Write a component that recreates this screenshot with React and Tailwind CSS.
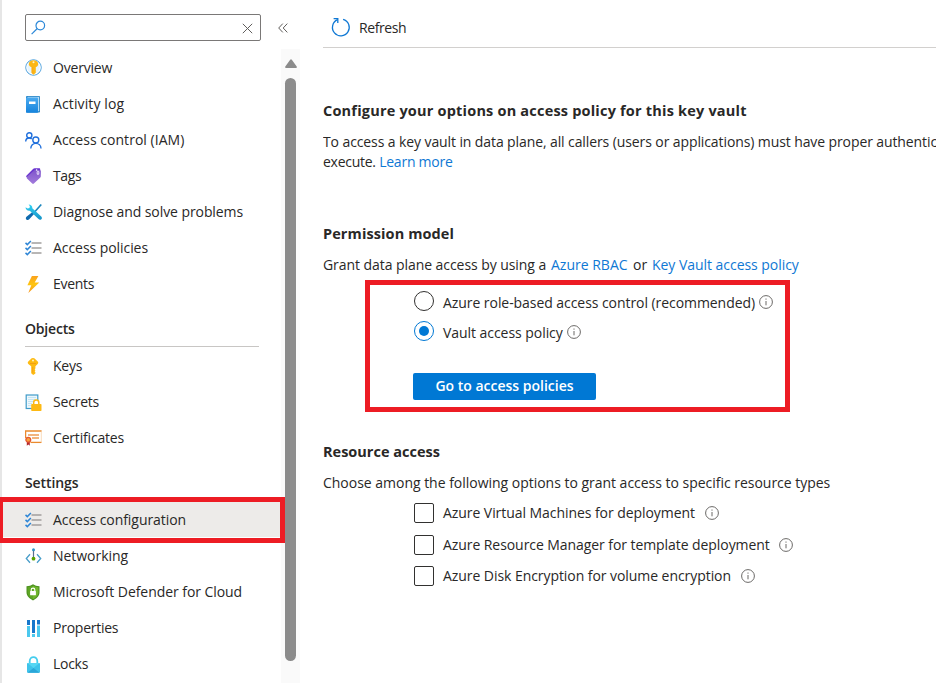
const OverviewIcon = () => (
  <svg width="17" height="17" viewBox="0 0 17 17" className="-mt-px">
    <circle cx="8.500" cy="8.500" r="7.700" fill="#e6f4fd" stroke="#3a96d9" />
    <circle cx="8.500" cy="8.500" r="6.700" fill="none" stroke="#fff" strokeWidth="1" />
    <path d="M8.500 1.200c2.700 0 4.700 1.600 4.700 3.700 0 1.600-1 2.700-2.400 3.200v5.600l-2.300 2-2.100-2V8.100C4.900 7.600 3.800 6.500 3.800 4.900c0-2.100 2-3.700 4.700-3.700z" fill="#fcb714" />
    <path d="M7.200 8h1v7l-1-1z" fill="#f9a61b" />
    <circle cx="8.500" cy="3.200" r="1" fill="#fff3c4" />
  </svg>
);

const LogIcon = () => (
  <svg width="16" height="17" viewBox="0 0 16 17">
    <defs>
      <linearGradient id="log" x1="0" y1="0" x2="0" y2="1">
        <stop offset="0" stopColor="#4aaaf0" />
        <stop offset="1" stopColor="#1583dc" />
      </linearGradient>
    </defs>
    <rect x="1" y="0" width="14" height="16.500" rx="1" fill="#2483c5" />
    <path d="M2.500.8h11.700v14.400H2.500z" fill="#b6dcf5" />
    <rect x="1" y="1.600" width="12" height="15.200" rx=".8" fill="url(#log)" />
    <rect x="4" y="5.500" width="6.500" height="2.500" fill="#fff" />
  </svg>
);

const PeopleIcon = () => (
  <svg width="17" height="17" viewBox="0 0 17 17" fill="none" stroke="#1f6fdc" strokeWidth="1.400">
    <circle cx="4.300" cy="3.300" r="2.600" />
    <path d="M.7 9.600C.7 7.300 2.300 6 4.200 6c1 0 1.900.3 2.500 1" />
    <circle cx="10.800" cy="8" r="3" />
    <path d="M5.800 16.600c0-3.200 2.200-5.200 5-5.200s5.200 2 5.200 5.200" />
  </svg>
);

const TagIcon = () => (
  <svg width="16" height="16" viewBox="0 0 16 16">
    <defs>
      <linearGradient id="tag" x1="0" y1="0" x2="0" y2="1">
        <stop offset="0" stopColor="#7f55cb" />
        <stop offset="1" stopColor="#a27bdc" />
      </linearGradient>
    </defs>
    <path d="M.9 8.300 8.300.8C8.700.4 9.100.2 9.700.2h4.500c.6 0 1 .4 1 1v4.600c0 .5-.2 1-.5 1.300L7.800 14.600z" fill="#6b35cf" />
    <path d="M2 8.700 9.500 2h4.700c.9 0 1.600.5 1.600 1.200v5c0 .5-.2.900-.5 1.200L8.900 15.600c-.5.500-1.200.500-1.700 0L2 10.500c-.5-.5-.5-1.300 0-1.800z" fill="url(#tag)" />
    <ellipse cx="13" cy="4.800" rx=".9" ry="1.900" fill="#9a72dc" stroke="#f1eafc" strokeWidth=".9" />
    <circle cx="11.600" cy="2" r=".8" fill="#fff" />
  </svg>
);

const ToolsIcon = () => (
  <svg width="17" height="16" viewBox="0 0 16 16" preserveAspectRatio="none">
    <defs>
      <linearGradient id="wrench" x1="0" y1="0" x2="0" y2="1">
        <stop offset="0" stopColor="#32d4f5" />
        <stop offset="1" stopColor="#1591c6" />
      </linearGradient>
    </defs>
    <path d="M15.300.5 8.800 8.200" stroke="#1b86bd" strokeWidth="1.500" />
    <path d="m8.200 7 1.600 1.600-5.800 6.700c-.8.800-2 .800-2.700.1-.7-.7-.7-1.800.1-2.600z" fill="#0f6aae" />
    <path d="M3.400.4c2.200 0 3.700 1.600 3.500 3.900l8.400 8.200c.8.800.8 1.900.1 2.700-.8.700-1.900.700-2.700-.1L4.500 6.700C2.300 7 .6 5.500.5 3.200l2 1.400 1.700-.6.400-1.700z" fill="url(#wrench)" />
  </svg>
);

const ChecklistIcon = () => (
  <svg width="17" height="16" viewBox="0 0 17 16" fill="none">
    <path d="M6.500 3h10M6.500 8h10M6.500 13h10" stroke="#a19f9d" strokeWidth="1.700" />
    <path d="m.5 2.900 1.800 1.700L5.900 1M.5 7.900l1.800 1.700L5.900 6M.5 12.900l1.800 1.700L5.900 11" stroke="#2f86d6" strokeWidth="1.500" />
  </svg>
);

const BoltIcon = () => (
  <svg width="16" height="17" viewBox="0 0 16 16" preserveAspectRatio="none">
    <defs>
      <linearGradient id="bolt" x1="0" y1="0" x2="0" y2="1">
        <stop offset="0" stopColor="#faa21d" />
        <stop offset=".5" stopColor="#fec510" />
        <stop offset="1" stopColor="#f79320" />
      </linearGradient>
    </defs>
    <path d="M6.900 0H13.400L9.700 6h4.600L3.300 16l3-7.300H2.400z" fill="url(#bolt)" />
  </svg>
);

const KeyIcon = () => (
  <svg width="16" height="17" viewBox="0 0 16 16" preserveAspectRatio="none">
    <path d="M8 0c1 0 1.700.4 2.400 1.200l2.300 2.200c.7.700.7 1.500 0 2.200L10.400 7.800v2l-.7.900.7.900-.7 1 .7.900v1L8.200 16 6.200 14.300V7.800L3.300 5.600c-.7-.7-.7-1.500 0-2.200l2.300-2.200C6.300.4 7 0 8 0z" fill="#fdbb13" />
    <path d="M7.200 8.500h1v5.700l-1-.8z" fill="#f6a11a" />
    <path d="M5 5.200h6" stroke="#f3a012" />
    <circle cx="8" cy="2.300" r="1" fill="#fff2c0" />
  </svg>
);

const SecretIcon = () => (
  <svg width="17" height="17" viewBox="0 0 17 17">
    <rect x="1.200" y="1" width="11.600" height="13.500" fill="#eef7fc" stroke="#3f9bc9" strokeWidth="1.200" />
    <path d="M3 3.500h8M3 5.500h8M3 7.500h8M3 9.500h4M3 11.500h4" stroke="#b9dff0" strokeWidth=".8" />
    <path d="M8.700 10.500V8.500c0-3.300 5.100-3.300 5.100 0v2" fill="#fff" stroke="#fdb913" strokeWidth="1.500" />
    <rect x="6.200" y="10" width="10.300" height="7" rx=".8" fill="#fdb913" />
  </svg>
);

const CertificateIcon = () => (
  <svg width="17" height="16" viewBox="0 0 17 16" fill="none">
    <path d="M.6 8V1h16" stroke="#ea8a2e" strokeWidth="1.300" />
    <path d="M5.500 12.400h11" stroke="#ea8a2e" strokeWidth="1.300" />
    <path d="M16.300 1v11.400" stroke="#f8cda0" strokeWidth=".7" />
    <path d="M3 5h11M7 8h7" stroke="#ee9c56" strokeWidth="1.300" />
    <path d="M1.800 11.500h3v4.300l-1.500-1.200-1.500 1.200z" fill="#b3282d" />
    <circle cx="3.300" cy="9.700" r="2.400" fill="#f9a03c" stroke="#e4572e" strokeWidth="1.300" />
  </svg>
);

const NetworkIcon = () => (
  <svg width="17" height="16" viewBox="0 0 17 16" fill="none">
    <path d="M5 6.300 1.300 10.500 5 14.700M12 6.300l3.700 4.200L12 14.700" stroke="#479dc9" strokeWidth="1.300" />
    <path d="M8.500 1.500v9" stroke="#5a6f8f" strokeWidth="1.200" />
    <circle cx="8.500" cy="1.700" r="1.500" fill="#2f92c5" />
    <circle cx="8.500" cy="10.700" r="1.900" fill="#57a300" />
  </svg>
);

const ShieldIcon = () => (
  <svg width="16" height="17" viewBox="0 0 16 17">
    <path d="M8 .3c1.800 1.200 4 1.900 6.500 1.900v6c0 4-3.500 6.500-6.500 8.300C5 14.700 1.500 12.200 1.500 8.200v-6C4 2.200 6.200 1.500 8 .3z" fill="#4d9220" />
    <path d="M8 1.500c1.500.9 3.400 1.600 5.400 1.700v5c0 3.400-2.800 5.500-5.400 7.100z" fill="#6fb52c" />
    <path d="M8 1.500C6.500 2.400 4.600 3.100 2.600 3.200v5c0 3.400 2.800 5.500 5.400 7.100z" fill="#5ea624" />
    <path d="M6.200 7.500V5.800c0-2.200 3.600-2.200 3.600 0v1.700" fill="none" stroke="#fff" strokeWidth="1.100" />
    <rect x="5.100" y="7" width="5.800" height="4.200" rx=".5" fill="#fff" />
  </svg>
);

const PropertiesIcon = () => (
  <svg width="17" height="17" viewBox="0 0 17 17">
    <path d="M2 0h3v5H2zM7 0h3v13H7zM12 0h3v4.500h-3z" fill="#1777cc" />
    <path d="M2 6h3v11H2zM7 14h3v3H7zM12 5.500h3V17h-3z" fill="#4cc8ee" />
  </svg>
);

const LockIcon = () => (
  <svg width="17" height="17" viewBox="0 0 17 17">
    <path d="M4.700 8V5.300c0-5.600 7.600-5.600 7.600 0V8" fill="none" stroke="#45cdee" strokeWidth="1.800" />
    <rect x="2" y="7" width="13" height="9.800" rx=".8" fill="#3fc3ea" />
    <path d="m2.500 16.800 6-4.800 6 4.800z" fill="#2aa6d8" />
    <path d="M2.500 7h12l-6 5z" fill="#55d6f3" />
  </svg>
);

const InfoIcon = ({ className }) => (
  <svg className={className} width="14" height="14" viewBox="0 0 14 14" fill="none">
    <circle cx="7" cy="7" r="6.400" stroke="#6b6967" />
    <path d="M7 6v4.300M7 3.500v1.200" stroke="#6b6967" />
  </svg>
);

const topItems = [
  [OverviewIcon, "Overview", "tracking-[-0.2px]"],
  [LogIcon, "Activity log", "tracking-[0.12px]"],
  [PeopleIcon, "Access control (IAM)", "tracking-[0.03px]"],
  [TagIcon, "Tags", "tracking-[-0.4px]"],
  [ToolsIcon, "Diagnose and solve problems", "tracking-[-0.08px]"],
  [ChecklistIcon, "Access policies", "tracking-[-0.06px]"],
  [BoltIcon, "Events", "tracking-[-0.3px]"],
];
const objectItems = [
  [KeyIcon, "Keys", "tracking-[-0.25px]"],
  [SecretIcon, "Secrets", "tracking-[-0.2px]"],
  [CertificateIcon, "Certificates", "tracking-[-0.18px]"],
];
const settingItems = [
  [ChecklistIcon, "Access configuration", "tracking-[-0.06px]", true],
  [NetworkIcon, "Networking", "tracking-[-0.04px]"],
  [ShieldIcon, "Microsoft Defender for Cloud", "tracking-[-0.06px]"],
  [PropertiesIcon, "Properties", "tracking-[-0.25px]"],
  [LockIcon, "Locks", "tracking-[-0.28px]"],
];

const NavItem = ({ item: [Icon, label, tracking, active] }) => (
  <div className={`relative flex h-9 items-center pt-0.5 pl-[23px] ${active ? "bg-[#edebe9]" : ""}`}>
    <span className="w-[17px] shrink-0"><Icon /></span>
    <span className={`ml-[11px] whitespace-nowrap ${tracking}`}>{label}</span>
    {active && <div className="absolute -top-1 -left-[2px] h-[46px] w-[285px] border-[5px] border-l-[3px] border-[#ed1c24]" />}
  </div>
);

const Sidebar = () => (
  <aside className="flex h-full w-[300px] shrink-0 flex-col border-l-2 border-[#e6e6e6]">
    <div className="flex h-[49px] shrink-0 items-start pt-3.5 pl-[23px]">
      <div className="flex h-[27px] w-[236px] items-center justify-between rounded-[2px] border border-[#7a7877] pr-[7px] pl-[5px]">
        <svg width="15" height="15" viewBox="0 0 15 15" fill="none" stroke="#2b88d8" strokeWidth="1.200">
          <circle cx="9.300" cy="5.500" r="4.300" />
          <path d="M6.300 8.500.6 14.200" />
        </svg>
        <svg width="11" height="11" viewBox="0 0 11 11" stroke="#605e5c" className="mt-0.5">
          <path d="m.8.8 9.400 9.400M10.200.8.8 10.200" />
        </svg>
      </div>
      <svg width="10" height="10" viewBox="0 0 10 10" fill="none" stroke="#605e5c" className="mt-[9px] ml-[17px]">
        <path d="M4.800.6.700 5l4.100 4.400M9.300.6 5.200 5l4.100 4.400" />
      </svg>
    </div>
    <div className="flex min-h-0 flex-1">
      <nav className="w-[279px] shrink-0">
        {topItems.map((i) => <NavItem key={i[1]} item={i} />)}
        <h3 className="ml-[23px] flex h-[46px] w-[234px] items-center border-b border-[#c8c6c4] pt-[10px] font-semibold tracking-[-0.2px]">Objects</h3>
        {objectItems.map((i) => <NavItem key={i[1]} item={i} />)}
        <h3 className="ml-[23px] flex h-[46px] w-[234px] items-center pt-[9px] font-semibold tracking-[-0.1px]">Settings</h3>
        {settingItems.map((i) => <NavItem key={i[1]} item={i} />)}
      </nav>
      <div className="flex w-[19px] flex-col items-center bg-[#fafafa] pt-[10px]">
        <svg width="12" height="9" viewBox="0 0 12 9">
          <path d="M5 .9a1.200 1.200 0 0 1 2 0l4.700 6.600c.4.700.1 1.500-.7 1.500H1C.2 9-.1 8.200.3 7.500z" fill="#8b8b8b" />
        </svg>
        <div className="mt-[10px] h-[583px] w-[11px] rounded-full bg-[#8b8b8b]" />
      </div>
    </div>
  </aside>
);

const Radio = ({ checked }) => (
  <span className={`flex size-5 items-center justify-center rounded-full border ${checked ? "border-[#0078d4]" : "border-[#323130]"}`}>
    {checked && <span className="size-[10px] rounded-full bg-[#0078d4]" />}
  </span>
);

const Check = ({ label, tracking, className, info }) => (
  <div className={`flex h-5 items-center ${className}`}>
    <span className="size-5 rounded-[2px] border border-[#323130]" />
    <span className={`ml-[9px] ${tracking}`}>{label}</span>
    <InfoIcon className={info} />
  </div>
);

const Link = ({ children, className }) => <a className={`text-[#0f78d4] ${className}`}>{children}</a>;

export default function App() {
  return (
    <div className="flex h-[683px] w-[936px] overflow-hidden bg-white font-['Open_Sans','Noto_Sans',sans-serif] text-sm leading-5 text-[#292827]">
      <Sidebar />
      <main className="ml-[23px] min-w-0 flex-1 overflow-hidden whitespace-nowrap">
        <div className="flex h-12 items-center border-b border-[#d2d0ce] pb-[1px] pl-2 pt-2">
          <svg width="20" height="20" viewBox="0 0 20 20" fill="none" stroke="#0f78d4" strokeWidth="1.300">
            <path d="M12.100 2.300A8.400 8.400 0 1 1 6.500 2.700" />
            <path d="M2.600 1.700h4.200V6" />
          </svg>
          <span className="mt-0.5 ml-2 tracking-[-0.43px]">Refresh</span>
        </div>
        <h2 className="mt-[53px] text-[14.5px] font-bold leading-5 tracking-[0.2px]">Configure your options on access policy for this key vault</h2>
        <p className="mt-[11px] tracking-[-0.1px]">To access a key vault in data plane, all callers (users or applications) must have proper authentic</p>
        <p className="tracking-[-0.26px]">execute. <Link className="tracking-[-0.24px]">Learn more</Link></p>
        <h2 className="mt-[52px] text-[14.5px] font-bold leading-5 tracking-[0.1px]">Permission model</h2>
        <p className="mt-[11px] flex">
          <span className="w-[228px] tracking-[-0.06px]">Grant data plane access by using a</span>
          <Link className="w-[82px]">Azure RBAC</Link>
          <span className="w-[19px]">or</span>
          <Link className="tracking-[-0.04px]">Key Vault access policy</Link>
        </p>
        <section className="mt-[5px] ml-[42px] flex h-[132px] w-[425px] flex-col items-start border-[5px] border-[#ed1c24] pt-[6px] pl-[44px]">
          <div className="flex h-5 items-center">
            <Radio />
            <span className="mt-[3px] ml-[9px] w-[316px] tracking-[-0.06px]">Azure role-based access control (recommended)</span>
            <InfoIcon className="mt-0.5" />
          </div>
          <div className="mt-2.5 flex h-5 items-center">
            <Radio checked />
            <span className="mt-[3px] ml-[9px] w-[124px] tracking-[-0.05px]">Vault access policy</span>
            <InfoIcon className="mt-0.5" />
          </div>
          <button className="mt-8 -ml-px flex h-[27px] w-[183px] items-center justify-center rounded-[2px] bg-[#0078d4] pb-0.5 font-semibold text-white">Go to access policies</button>
        </section>
        <h2 className="mt-[30px] text-[14.5px] font-bold leading-5">Resource access</h2>
        <p className="mt-[11px] tracking-[-0.02px]">Choose among the following options to grant access to specific resource types</p>
        <div className="pl-[91px]">
          <Check className="mt-2.5" label="Azure Virtual Machines for deployment" tracking="w-[252px] tracking-[-0.06px]" info="ml-2.5" />
          <Check className="mt-3" label="Azure Resource Manager for template deployment" tracking="w-[327px] tracking-[-0.07px]" info="ml-[9px]" />
          <Check className="mt-[11px]" label="Azure Disk Encryption for volume encryption" tracking="w-[288px] tracking-[-0.06px]" info="ml-2.5" />
        </div>
      </main>
    </div>
  );
}
